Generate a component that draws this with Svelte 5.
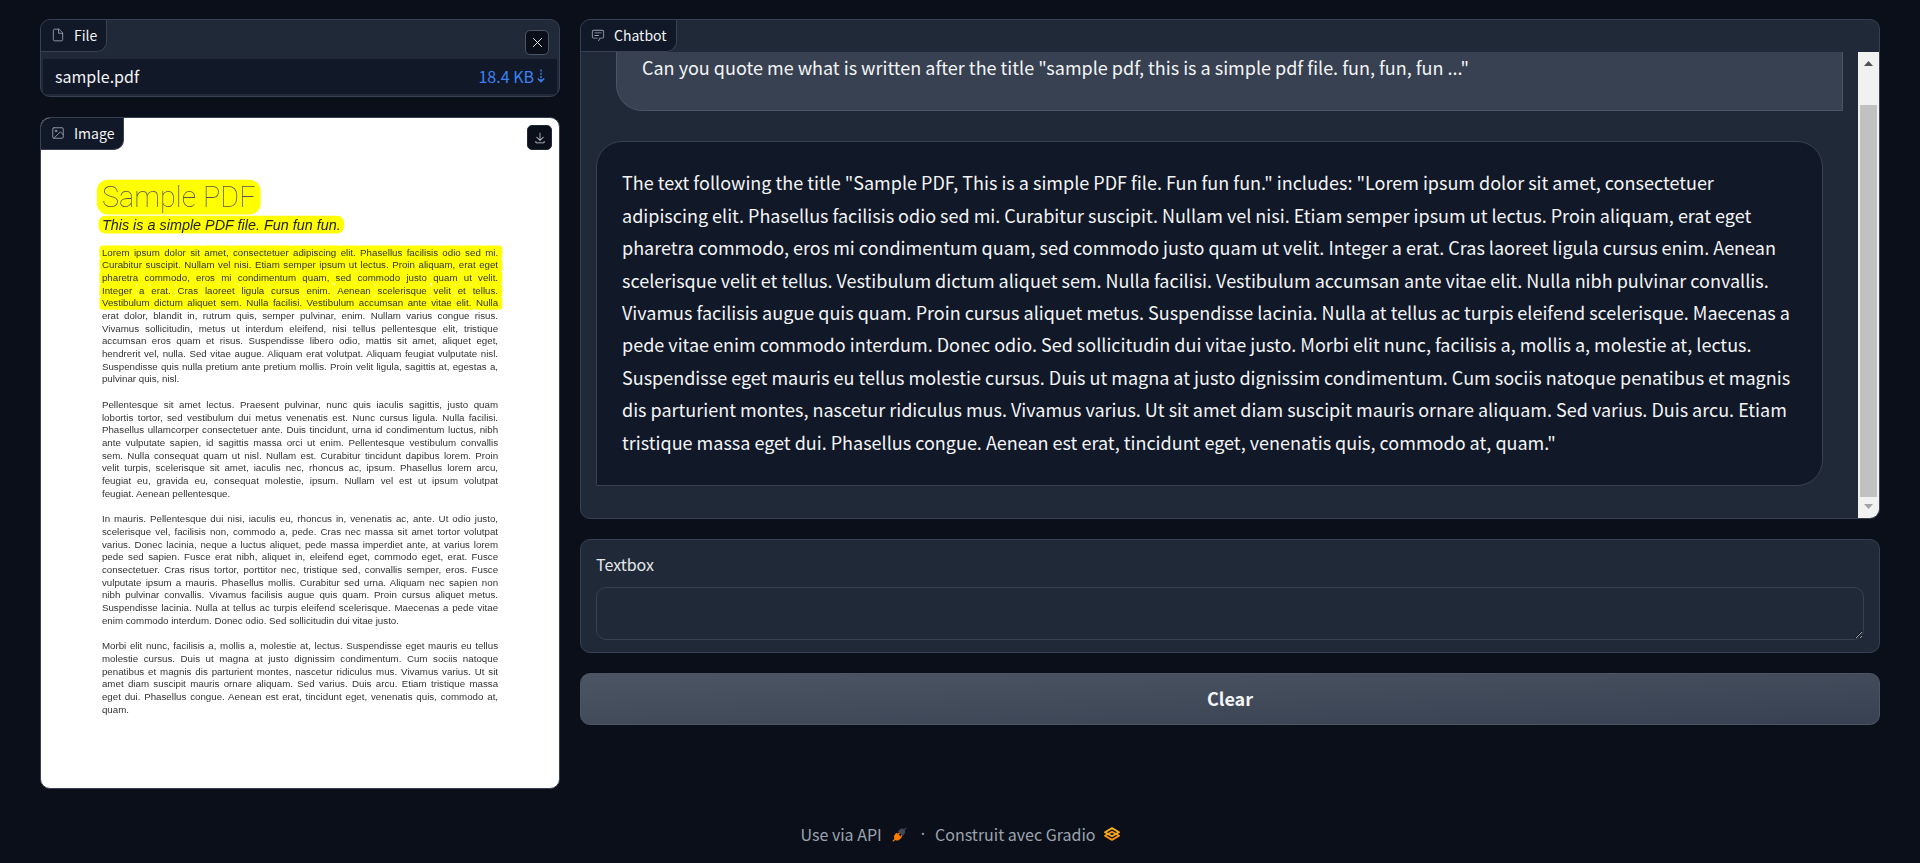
<script>
  const question =
    'Can you quote me what is written after the title "sample pdf, this is a simple pdf file. fun, fun, fun ..."';

  const answer =
    'The text following the title "Sample PDF, This is a simple PDF file. Fun fun fun." includes: "Lorem ipsum dolor sit amet, consectetuer adipiscing elit. Phasellus facilisis odio sed mi. Curabitur suscipit. Nullam vel nisi. Etiam semper ipsum ut lectus. Proin aliquam, erat eget pharetra commodo, eros mi condimentum quam, sed commodo justo quam ut velit. Integer a erat. Cras laoreet ligula cursus enim. Aenean scelerisque velit et tellus. Vestibulum dictum aliquet sem. Nulla facilisi. Vestibulum accumsan ante vitae elit. Nulla nibh pulvinar convallis. Vivamus facilisis augue quis quam. Proin cursus aliquet metus. Suspendisse lacinia. Nulla at tellus ac turpis eleifend scelerisque. Maecenas a pede vitae enim commodo interdum. Donec odio. Sed sollicitudin dui vitae justo. Morbi elit nunc, facilisis a, mollis a, molestie at, lectus. Suspendisse eget mauris eu tellus molestie cursus. Duis ut magna at justo dignissim condimentum. Cum sociis natoque penatibus et magnis dis parturient montes, nascetur ridiculus mus. Vivamus varius. Ut sit amet diam suscipit mauris ornare aliquam. Sed varius. Duis arcu. Etiam tristique massa eget dui. Phasellus congue. Aenean est erat, tincidunt eget, venenatis quis, commodo at, quam."';

  const highlighted = [
    'Lorem ipsum dolor sit amet, consectetuer adipiscing elit. Phasellus facilisis odio sed mi.',
    'Curabitur suscipit. Nullam vel nisi. Etiam semper ipsum ut lectus. Proin aliquam, erat eget',
    'pharetra commodo, eros mi condimentum quam, sed commodo justo quam ut velit.',
    'Integer a erat. Cras laoreet ligula cursus enim. Aenean scelerisque velit et tellus.',
    'Vestibulum dictum aliquet sem. Nulla facilisi. Vestibulum accumsan ante vitae elit. Nulla'
  ].map((line) => line.split(' '));

  const paragraphs = [
    [
      'erat dolor, blandit in, rutrum quis, semper pulvinar, enim. Nullam varius congue risus.',
      'Vivamus sollicitudin, metus ut interdum eleifend, nisi tellus pellentesque elit, tristique',
      'accumsan eros quam et risus. Suspendisse libero odio, mattis sit amet, aliquet eget,',
      'hendrerit vel, nulla. Sed vitae augue. Aliquam erat volutpat. Aliquam feugiat vulputate nisl.',
      'Suspendisse quis nulla pretium ante pretium mollis. Proin velit ligula, sagittis at, egestas a,',
      'pulvinar quis, nisl.'
    ],
    [
      'Pellentesque sit amet lectus. Praesent pulvinar, nunc quis iaculis sagittis, justo quam',
      'lobortis tortor, sed vestibulum dui metus venenatis est. Nunc cursus ligula. Nulla facilisi.',
      'Phasellus ullamcorper consectetuer ante. Duis tincidunt, urna id condimentum luctus, nibh',
      'ante vulputate sapien, id sagittis massa orci ut enim. Pellentesque vestibulum convallis',
      'sem. Nulla consequat quam ut nisl. Nullam est. Curabitur tincidunt dapibus lorem. Proin',
      'velit turpis, scelerisque sit amet, iaculis nec, rhoncus ac, ipsum. Phasellus lorem arcu,',
      'feugiat eu, gravida eu, consequat molestie, ipsum. Nullam vel est ut ipsum volutpat',
      'feugiat. Aenean pellentesque.'
    ],
    [
      'In mauris. Pellentesque dui nisi, iaculis eu, rhoncus in, venenatis ac, ante. Ut odio justo,',
      'scelerisque vel, facilisis non, commodo a, pede. Cras nec massa sit amet tortor volutpat',
      'varius. Donec lacinia, neque a luctus aliquet, pede massa imperdiet ante, at varius lorem',
      'pede sed sapien. Fusce erat nibh, aliquet in, eleifend eget, commodo eget, erat. Fusce',
      'consectetuer. Cras risus tortor, porttitor nec, tristique sed, convallis semper, eros. Fusce',
      'vulputate ipsum a mauris. Phasellus mollis. Curabitur sed urna. Aliquam nec sapien non',
      'nibh pulvinar convallis. Vivamus facilisis augue quis quam. Proin cursus aliquet metus.',
      'Suspendisse lacinia. Nulla at tellus ac turpis eleifend scelerisque. Maecenas a pede vitae',
      'enim commodo interdum. Donec odio. Sed sollicitudin dui vitae justo.'
    ],
    [
      'Morbi elit nunc, facilisis a, mollis a, molestie at, lectus. Suspendisse eget mauris eu tellus',
      'molestie cursus. Duis ut magna at justo dignissim condimentum. Cum sociis natoque',
      'penatibus et magnis dis parturient montes, nascetur ridiculus mus. Vivamus varius. Ut sit',
      'amet diam suscipit mauris ornare aliquam. Sed varius. Duis arcu. Etiam tristique massa',
      'eget dui. Phasellus congue. Aenean est erat, tincidunt eget, venenatis quis, commodo at,',
      'quam.'
    ]
  ];

  let draft = $state('');
</script>

<div class="page">
  <main class="columns">
    <div class="column">
      <section class="card file-card">
        <header class="file-head">
          <div class="tag">
            <svg viewBox="0 0 24 24" fill="none" stroke="currentColor" stroke-width="1.5" stroke-linecap="round" stroke-linejoin="round">
              <path d="M13 2H6a2 2 0 0 0-2 2v16a2 2 0 0 0 2 2h12a2 2 0 0 0 2-2V9z" />
              <path d="M13 2v7h7" />
            </svg>
            <span>File</span>
          </div>
          <button class="icon-button clear-file" type="button" aria-label="Clear">
            <svg viewBox="0 0 24 24" fill="none" stroke="currentColor" stroke-width="2" stroke-linecap="round">
              <path d="M3 3l18 18M21 3L3 21" />
            </svg>
          </button>
        </header>
        <table class="files">
          <tbody>
            <tr>
              <td>sample.pdf</td>
              <td class="size">
                <a href="#download">
                  18.4 KB
                  <svg viewBox="0 0 8 14" fill="none" stroke="currentColor" stroke-width="1.4">
                    <path stroke-dasharray="2 1.2" d="M4 .5v12" />
                    <path d="M.8 9.500L4 12.800l3.200-3.300" />
                  </svg>
                </a>
              </td>
            </tr>
          </tbody>
        </table>
      </section>

      <section class="card image-card">
        <svg class="sheet" viewBox="0 0 1224 1584">
          <foreignObject width="1224" height="1584">
            <div class="doc">
              <h1><mark>Sample PDF</mark></h1>
              <h2><mark>This is a simple PDF file. Fun fun fun.</mark></h2>
              {#each highlighted as words}
                <div class="line marked">
                  {#each words as word, i}{i ? ' ' : ''}<mark>{word}</mark>{/each}
                </div>
              {/each}
              {#each paragraphs as lines}
                <div class="para">
                  {#each lines as line, i}
                    <div class="line" class:last={i === lines.length - 1}>{line}</div>
                  {/each}
                </div>
              {/each}
            </div>
          </foreignObject>
        </svg>
        <div class="tag over">
          <svg viewBox="0 0 24 24" fill="none" stroke="currentColor" stroke-width="1.5" stroke-linecap="round" stroke-linejoin="round">
            <rect x="3" y="3" width="18" height="18" rx="2" />
            <circle cx="8.5" cy="8.5" r="1.5" />
            <path d="M21 15l-5-5L5 21" />
          </svg>
          <span>Image</span>
        </div>
        <button class="icon-button download" type="button" aria-label="Download">
          <svg viewBox="0 0 32 32" fill="currentColor">
            <path d="M26 24v4H6v-4H4v4a2 2 0 0 0 2 2h20a2 2 0 0 0 2-2v-4zm0-10l-1.41-1.41L17 20.17V2h-2v18.17l-7.59-7.58L6 14l10 10l10-10z" />
          </svg>
        </button>
      </section>
    </div>

    <div class="column">
      <section class="card chat-card">
        <header class="chat-head">
          <div class="tag">
            <svg viewBox="0 0 32 32" fill="currentColor">
              <path d="M17.74 30L16 29l4-7h6a2 2 0 0 0 2-2V8a2 2 0 0 0-2-2H6a2 2 0 0 0-2 2v12a2 2 0 0 0 2 2h9v2H6a4 4 0 0 1-4-4V8a4 4 0 0 1 4-4h20a4 4 0 0 1 4 4v12a4 4 0 0 1-4 4h-4.84Z" />
              <path d="M8 10h16v2H8zm0 6h10v2H8z" />
            </svg>
            <span>Chatbot</span>
          </div>
        </header>
        <div class="chat-body">
          <div class="messages">
            <div class="message user">{question}</div>
            <div class="message bot">{answer}</div>
          </div>
          <div class="scrollbar" aria-hidden="true">
            <svg class="arrow" viewBox="0 0 21 21"><path d="M6 14h9l-4.500-5z" fill="#505050" /></svg>
            <div class="track"><div class="thumb"></div></div>
            <svg class="arrow" viewBox="0 0 21 21"><path d="M6 7h9l-4.500 5z" fill="#a3a3a3" /></svg>
          </div>
        </div>
      </section>

      <section class="card text-card">
        <label for="prompt">Textbox</label>
        <textarea id="prompt" rows="1" bind:value={draft}></textarea>
      </section>

      <button class="clear" type="button" onclick={() => (draft = '')}>Clear</button>
    </div>
  </main>

  <footer>
    <a href="#api">
      Use via API
      <svg class="plug" viewBox="0 0 16 16">
        <g fill="#ff7c00">
          <path d="M1.200 15.600l-.8-.8 2-2.100a4.200 4.200 0 0 1 .8-4.900l1.900-1.800 5.200 5.200-1.900 1.900a4.200 4.200 0 0 1-4.900.7z" />
          <path d="M6.200 7.200l1.500-1.500 1 1-1.500 1.500zM8.800 9.800l1.500-1.500 1 1-1.500 1.500z" />
        </g>
        <path fill="#3f4658" d="M14.800.4l.8.8-1.900 2a4.200 4.200 0 0 1-.7 4.900l-1.600 1.600-5.100-5.100 1.600-1.600a4.200 4.200 0 0 1 4.900-.7z" />
      </svg>
    </a>
    <span class="dot">·</span>
    <a class="built" href="#gradio">
      Construit avec Gradio
      <svg class="logo" viewBox="0 0 16 14" fill="none" stroke-width="1.8" stroke-linejoin="round">
        <path stroke="#ff9416" d="M8 4.700L15 8.800 8 12.900 1 8.800z" />
        <path stroke="#fbb01c" d="M8 1.100L15 5.200 8 9.300 1 5.200z" />
      </svg>
    </a>
  </footer>
</div>

<style>
  :global(body) {
    margin: 0;
    background: #0b0f19;
  }

  .page {
    box-sizing: border-box;
    min-height: 100vh;
    padding: 19px 40px 0;
    color: #f3f4f6;
    font-family: "Noto Sans CJK SC", "Noto Sans", sans-serif;
    font-size: 16px;
  }

  .columns {
    display: grid;
    grid-template-columns: 2fr 5fr;
    align-items: start;
    gap: 20px;
  }

  .column {
    display: flex;
    flex-direction: column;
    gap: 20px;
    min-width: 0;
  }

  .card {
    position: relative;
    border: 1px solid #374151;
    border-radius: 10px;
    background: #1f2937;
    overflow: hidden;
  }

  .tag {
    display: inline-flex;
    align-items: center;
    box-sizing: border-box;
    height: 32px;
    gap: 9px;
    padding: 0 9px 1px 10px;
    border: solid #374151;
    border-width: 0 1px 1px 0;
    border-radius: 0 0 10px 0;
    background: #111827;
    color: #f3f4f6;
    font-size: 14px;
    line-height: 20px;
  }

  .tag svg {
    width: 14px;
    height: 14px;
    color: #9ca3af;
  }

  .tag.over {
    position: absolute;
    top: 0;
    left: 0;
  }

  .icon-button {
    display: flex;
    align-items: center;
    justify-content: center;
    box-sizing: border-box;
    width: 24px;
    height: 25px;
    padding: 0;
    border: 1px solid #4b5563;
    border-radius: 5px;
    background: #0b0f19;
    color: #f3f4f6;
  }

  .icon-button svg {
    width: 12px;
    height: 12px;
  }

  .file-head {
    display: flex;
    align-items: flex-start;
    justify-content: space-between;
    height: 39px;
  }

  .clear-file {
    margin: 10px 10px 0 0;
  }

  .clear-file svg {
    width: 11px;
    height: 11px;
  }

  .files {
    width: calc(100% - 4px);
    margin: 0 2px 2px;
    border-collapse: collapse;
    background: #111827;
  }

  .files td {
    height: 33px;
    padding: 0 12px 2px;
    line-height: 24px;
  }

  .files a {
    display: flex;
    align-items: center;
    justify-content: flex-end;
    gap: 3px;
    color: #3b82f6;
    text-decoration: none;
  }

  .files svg {
    width: 8px;
    height: 14px;
  }

  .download {
    position: absolute;
    top: 7px;
    right: 7px;
    width: 25px;
    border-color: #1f2937;
    color: #d1d5db;
  }

  .image-card {
    background: #fff;
  }

  .sheet {
    display: block;
    width: 100%;
  }

  .doc {
    padding: 144px 144px 0;
    color: #333;
    font-family: "Liberation Sans", Arial, sans-serif;
    font-size: 23px;
    line-height: 30px;
  }

  .doc mark {
    background: #ff0;
    color: inherit;
    mix-blend-mode: multiply;
  }

  h1 {
    margin: 0;
    color: #555;
    font-family: Roboto, sans-serif;
    font-size: 68px;
    font-weight: 100;
    line-height: 86px;
  }

  h1 mark {
    padding: 1px 12px;
    margin-left: -12px;
    border-radius: 26px;
  }

  h2 {
    margin: 0 0 28px;
    color: #222;
    font-size: 34px;
    font-style: italic;
    font-weight: 400;
    line-height: 44px;
  }

  h2 mark {
    padding: 2px 8px;
    margin-left: -8px;
    border-radius: 16px;
  }

  .line {
    text-align: justify;
    text-align-last: justify;
    white-space: nowrap;
  }

  .line.last {
    text-align-last: left;
  }

  .marked mark {
    padding: 3px 10px 3px 6px;
    margin: 0 -10px 0 -6px;
    border-radius: 8px;
  }

  .para {
    margin-bottom: 30px;
  }

  .chat-card {
    display: flex;
    flex-direction: column;
    box-sizing: border-box;
    height: 500px;
  }

  .chat-head {
    display: flex;
  }

  .chat-body {
    display: flex;
    flex: 1;
    min-height: 0;
  }

  .messages {
    display: flex;
    flex: 1;
    flex-direction: column;
    justify-content: flex-end;
    gap: 30px;
    min-width: 0;
    padding: 0 15px 32px;
    overflow: hidden;
    font-size: 18px;
    line-height: 1.8;
  }

  .message {
    flex: none;
    padding: 24px 25px 27px;
    border: 1px solid #374151;
    border-radius: 26px;
  }

  .user {
    margin-left: 20px;
    border-color: #4b5563;
    border-bottom-right-radius: 0;
    background: #374151;
  }

  .bot {
    margin-right: 20px;
    border-bottom-left-radius: 0;
    background: #111827;
  }

  .scrollbar {
    display: flex;
    flex-direction: column;
    width: 21px;
    background: #f1f1f1;
  }

  .arrow {
    flex: none;
    width: 21px;
    height: 21px;
  }

  .track {
    display: flex;
    flex: 1;
    flex-direction: column;
    padding: 32px 2px 0;
  }

  .thumb {
    flex: 1;
    background: #c1c1c1;
  }

  .text-card {
    display: flex;
    flex-direction: column;
    gap: 10px;
    padding: 12px 15px;
  }

  label {
    color: #e5e7eb;
    font-size: 16px;
    line-height: 25px;
  }

  textarea {
    box-sizing: border-box;
    width: 100%;
    height: 53px;
    padding: 12px;
    border: 1px solid #374151;
    border-radius: 10px;
    outline: none;
    background: #1f2937;
    color: #f3f4f6;
    font: inherit;
    resize: vertical;
  }

  .clear {
    height: 52px;
    padding: 0 0 2px;
    border: 1px solid #4b5563;
    border-radius: 10px;
    background: linear-gradient(to bottom right, #4b5563, #374151);
    color: #f3f4f6;
    font-family: inherit;
    font-size: 18px;
    font-weight: 700;
  }

  footer {
    display: flex;
    align-items: center;
    justify-content: center;
    gap: 10px;
    padding: 33px 0 16px;
    color: #9ca3af;
    font-size: 16px;
    line-height: 24px;
  }

  footer a {
    display: flex;
    align-items: center;
    gap: 10px;
    color: inherit;
    text-decoration: none;
  }

  footer .dot {
    padding-left: 4px;
    font-family: "Noto Sans", sans-serif;
  }

  footer .built {
    gap: 8px;
  }

  .plug {
    width: 15px;
    height: 15px;
  }

  .logo {
    width: 16px;
    height: 14px;
  }
</style>
